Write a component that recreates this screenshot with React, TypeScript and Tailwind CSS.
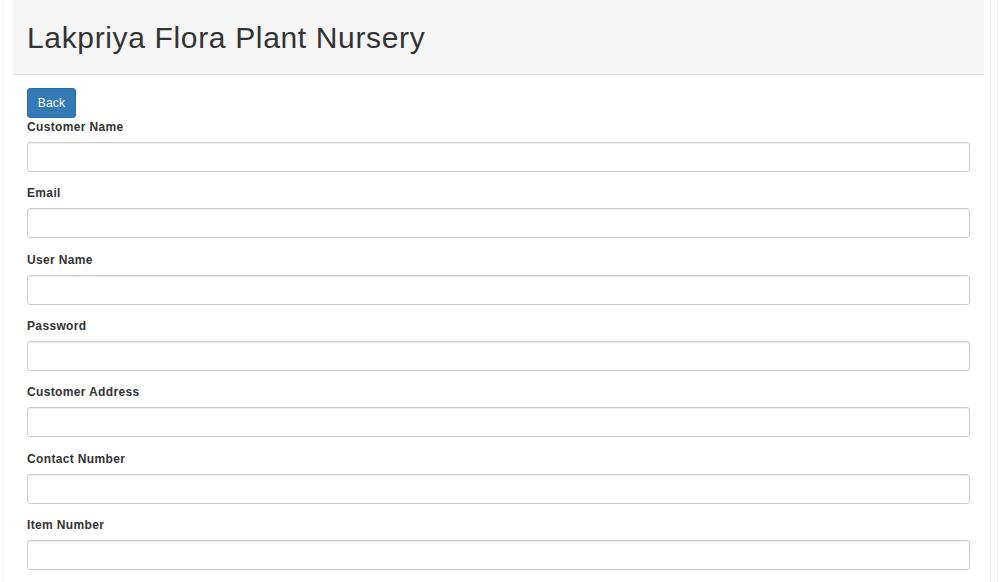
import React from "react";

const fields = [
  "Customer Name",
  "Email",
  "User Name",
  "Password",
  "Customer Address",
  "Contact Number",
  "Item Number",
];

export default function App() {
  return (
    <div
      className="w-[999px] h-[582px] overflow-hidden bg-white relative"
      style={{ fontFamily: '"Liberation Sans", Arial, sans-serif' }}
    >
      <div className="absolute left-[3px] top-0 bottom-0 w-px bg-[#f4f4f4]" />
      <div className="absolute left-[990px] top-0 bottom-0 w-[8px] border-l border-r border-[#f2f2f2] bg-[#fdfdfd]" />
      <div className="ml-[13px] mr-[15px] h-[75px] bg-[#f5f5f5] border-b border-[#e0e0e0] pl-[14px] pt-[21px]">
        <h2 className="text-[30px] leading-[33px] tracking-[0.65px] text-[#333] font-normal m-0">
          Lakpriya Flora Plant Nursery
        </h2>
      </div>
      <div className="pl-[27px] pr-[29px] pt-[13px]">
        <button className="h-[30px] w-[49px] rounded-[3px] bg-[#337ab7] border border-[#2e6da4] text-white text-[12px] leading-[28px] text-center tracking-[0.2px]">
          Back
        </button>
        <div className="mt-px">
          {fields.map((f) => (
            <div key={f} className="mb-[13.33px]">
              <label className="block h-[17px] text-[12px] leading-[17px] font-bold tracking-[0.35px] text-[#333] mb-[6px]">
                {f}
              </label>
              <input
                type="text"
                className="block w-[943px] h-[30px] border border-[#cccccc] rounded-[3px] bg-white shadow-[inset_0_1px_1px_rgba(0,0,0,0.075)] outline-none"
              />
            </div>
          ))}
        </div>
      </div>
    </div>
  );
}
